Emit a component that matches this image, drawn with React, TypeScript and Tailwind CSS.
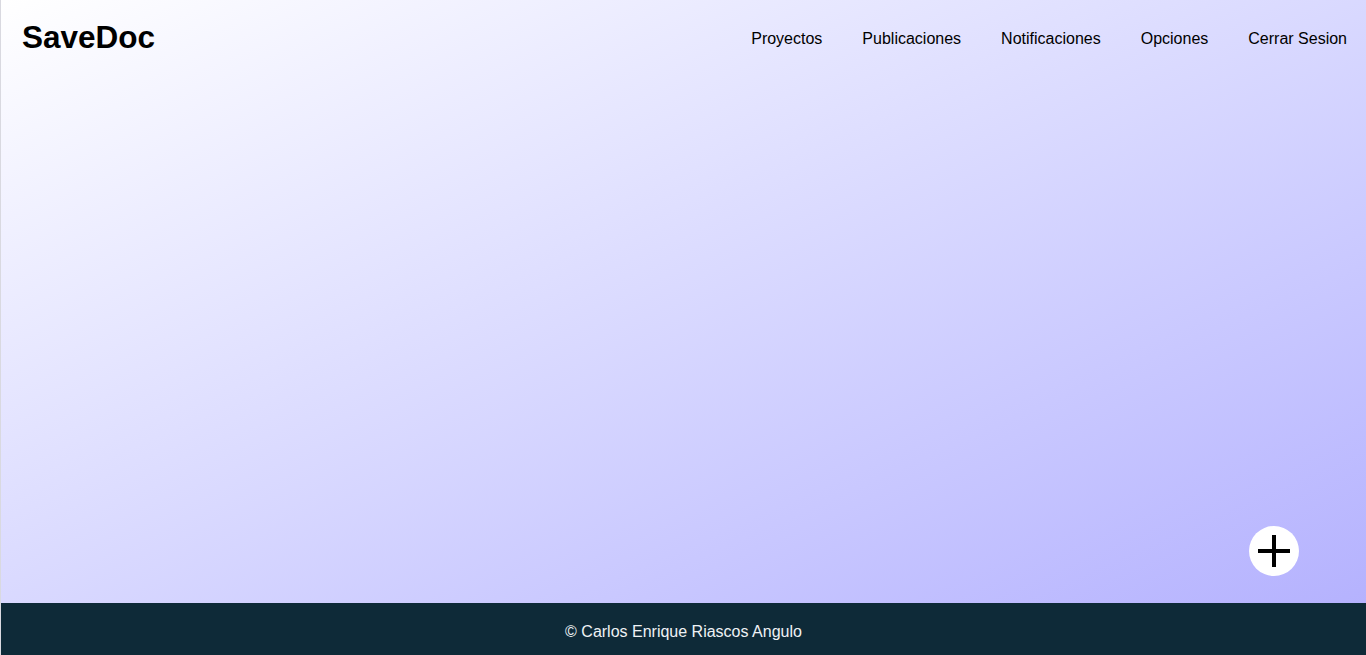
const links = ["Proyectos", "Publicaciones", "Notificaciones", "Opciones", "Cerrar Sesion"];

export default function App() {
  return (
    <div className="h-[655px] w-full flex flex-col font-['Liberation_Sans',Arial,sans-serif] border-l border-[#d9d9e0]">
      {/* main area with gradient */}
      <div className="flex-1 flex flex-col bg-gradient-to-br from-white to-[#b5b2fe]">
        <header className="h-[76px] flex items-center justify-between pl-[21px] pr-[19px]">
          <h1 className="text-[31.5px] font-bold text-black">SaveDoc</h1>
          <nav className="flex items-center gap-[40px] pt-[2px]">
            {links.map((l) => (
              <a key={l} href="#" className="text-base text-black">
                {l}
              </a>
            ))}
          </nav>
        </header>
        <div className="flex-1 flex items-end justify-end pr-[67px] pb-[27px]">
          <button className="w-[50px] h-[50px] rounded-full bg-white flex items-center justify-center">
            <svg width="32" height="32" viewBox="0 0 32 32">
              <path d="M0 16H32M16 0V32" stroke="black" strokeWidth="4" fill="none" />
            </svg>
          </button>
        </div>
      </div>
      <footer className="h-[52px] bg-[#0e2a38] flex items-center justify-center pt-[6px]">
        <p className="text-base text-[#eef2f5]">© Carlos Enrique Riascos Angulo</p>
      </footer>
    </div>
  );
}
